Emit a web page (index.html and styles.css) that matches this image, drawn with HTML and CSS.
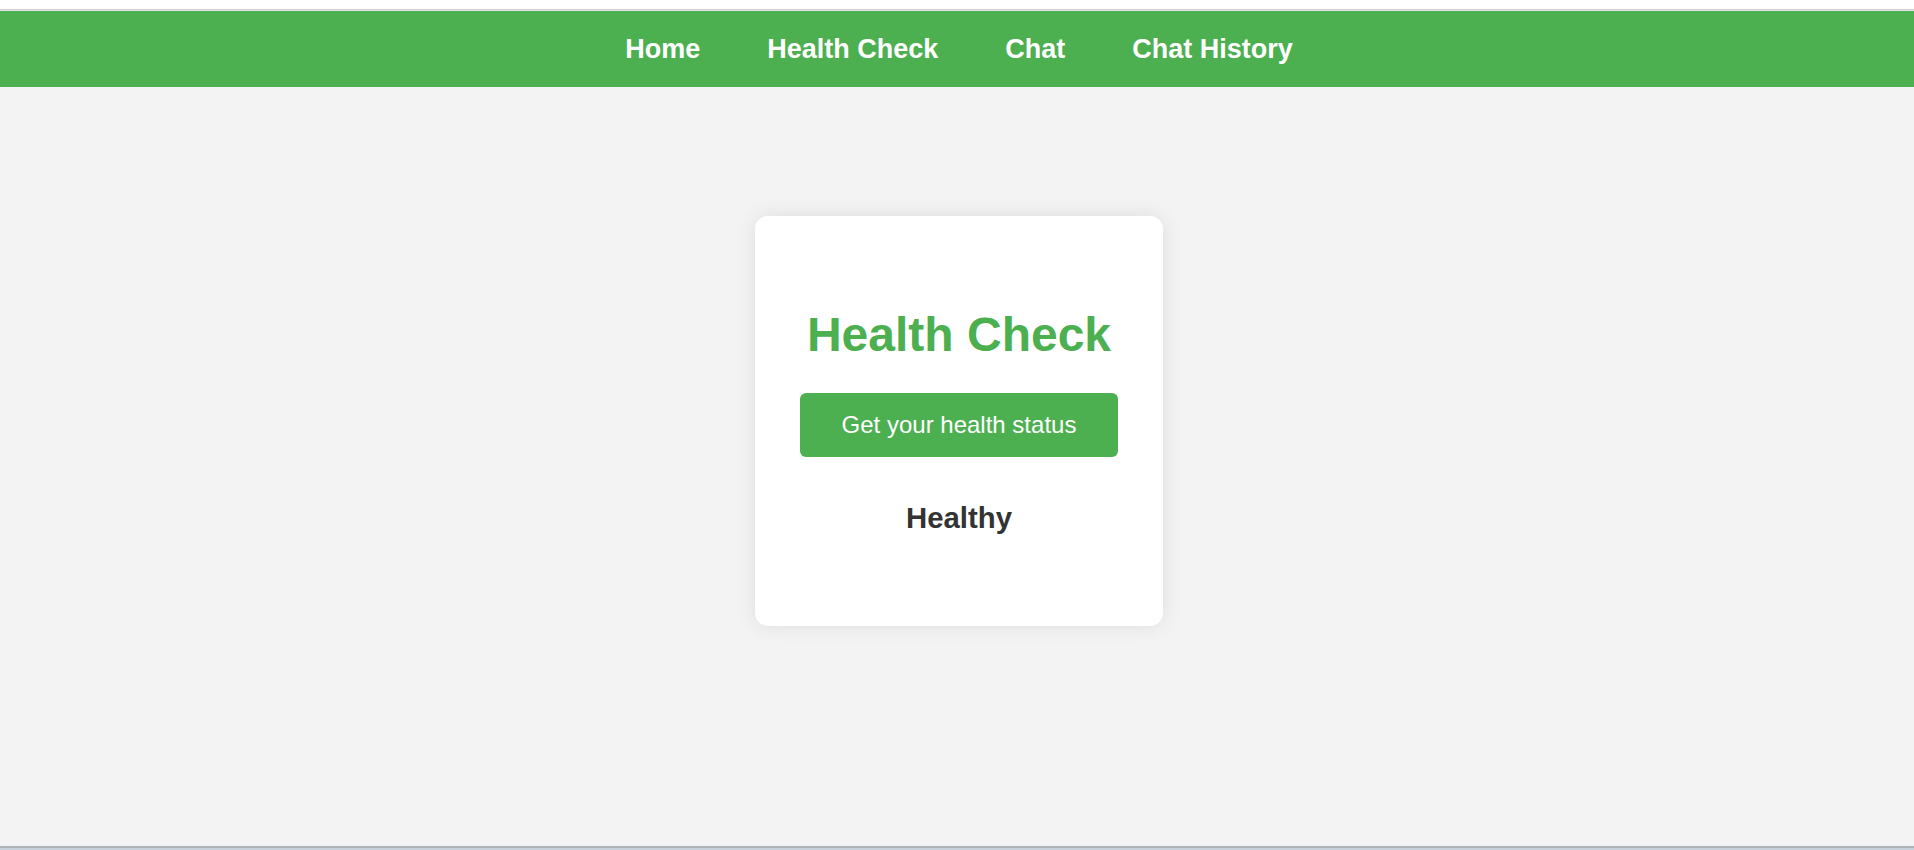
FILE: index.html
```html
<!DOCTYPE html>
<html lang="en">
<head>
<meta charset="utf-8">
<title>Health Check</title>
<link rel="stylesheet" href="styles.css">
</head>
<body>
<div class="top-strip"></div>
<nav class="navbar">
  <a class="nav-link" href="#">Home</a>
  <a class="nav-link" href="#">Health Check</a>
  <a class="nav-link" href="#">Chat</a>
  <a class="nav-link" href="#">Chat History</a>
</nav>
<main class="main">
  <section class="card">
    <h1 class="card-title">Health Check</h1>
    <button class="status-btn" type="button">Get your health status</button>
    <p class="status-text">Healthy</p>
  </section>
</main>
<div class="bottom-strip"></div>
</body>
</html>
```

FILE: styles.css
```css
html, body {
  margin: 0;
  padding: 0;
  height: 100%;
}

body {
  display: flex;
  flex-direction: column;
  height: 850px;
  background: #f3f3f3;
  font-family: "Liberation Sans", Arial, sans-serif;
  overflow: hidden;
}

.top-strip {
  flex: none;
  height: 10px;
  background: linear-gradient(to bottom, #ffffff 0, #ffffff 9px, #cfcfcf 9px, #cfcfcf 10px);
  border-bottom: 1px solid #e4e4e4;
}

.navbar {
  flex: none;
  height: 76px;
  background: #4caf50;
  display: flex;
  justify-content: center;
  align-items: center;
  gap: 67px;
  padding-left: 4px;
}

.nav-link {
  color: #ffffff;
  text-decoration: none;
  font-weight: bold;
  font-size: 27px;
}

.main {
  flex: 1;
  display: flex;
  justify-content: center;
  align-items: flex-start;
  padding-top: 129px;
  padding-left: 4px;
}

.card {
  width: 408px;
  box-sizing: border-box;
  background: #ffffff;
  border-radius: 13px;
  box-shadow: 0 0 20px rgba(0, 0, 0, 0.09);
  padding: 91px 0 91px;
  display: flex;
  flex-direction: column;
  align-items: center;
}

.card-title {
  margin: 0 0 31px;
  font-size: 48px;
  font-weight: bold;
  color: #4caf50;
  line-height: normal;
}

.status-btn {
  width: 318px;
  height: 64px;
  border: none;
  border-radius: 6px;
  background: #4caf50;
  color: #ffffff;
  font-family: "Liberation Sans", Arial, sans-serif;
  font-size: 24px;
  cursor: pointer;
}

.status-text {
  margin: 44px 0 0;
  font-size: 29.33px;
  font-weight: bold;
  color: #333333;
  line-height: normal;
}

.bottom-strip {
  flex: none;
  height: 2px;
  background: #aeb2b7;
  border-bottom: 2px solid #c6d1dc;
}
```
